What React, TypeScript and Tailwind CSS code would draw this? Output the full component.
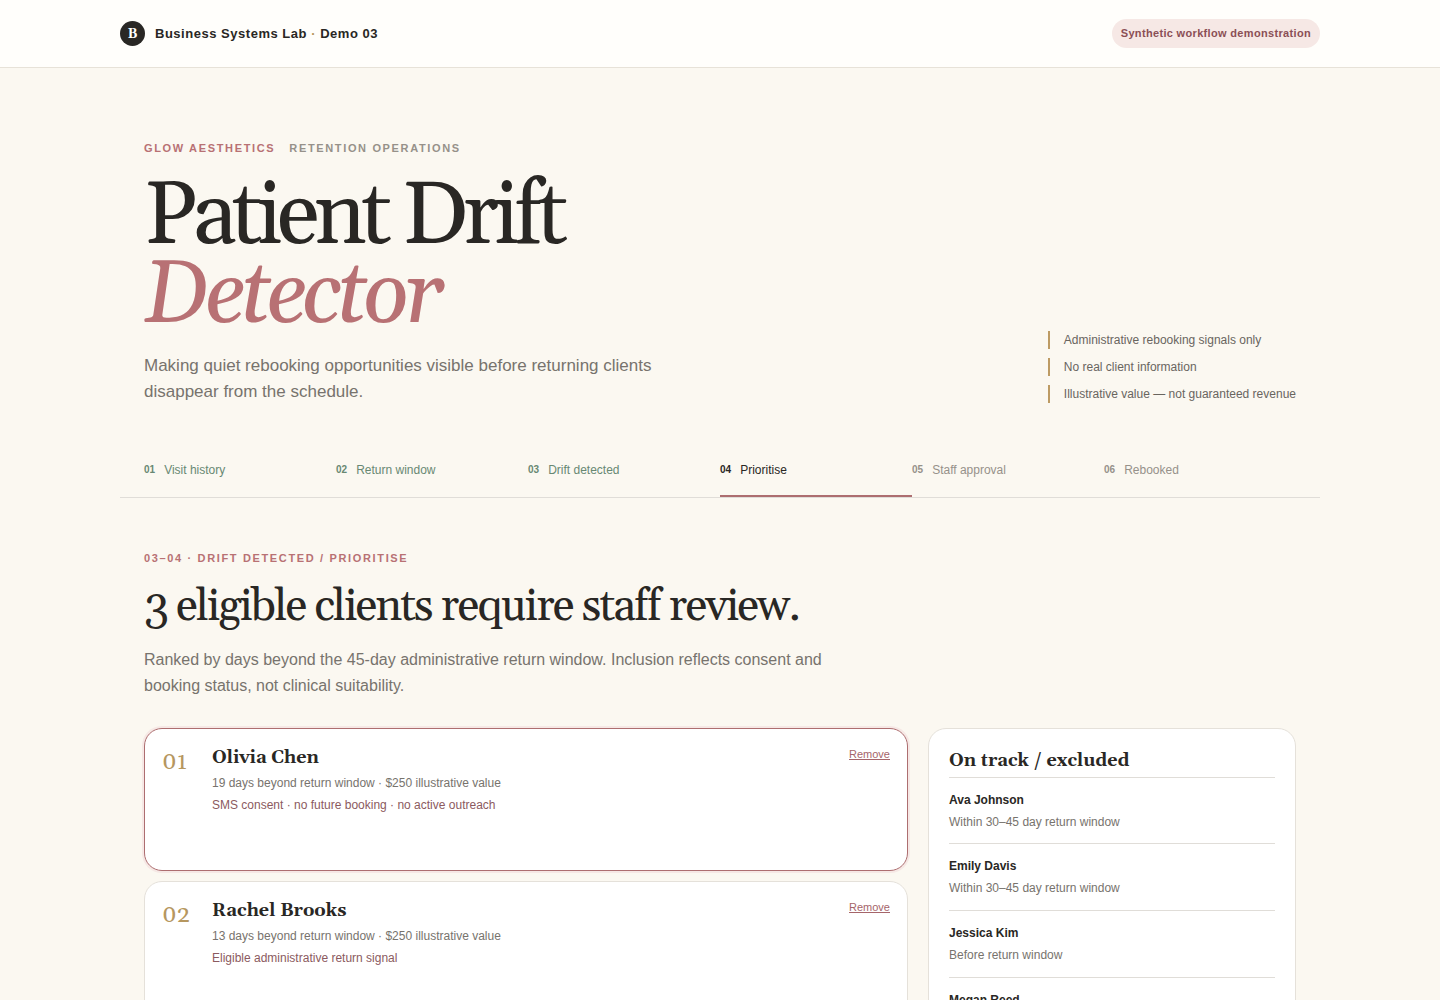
const steps = [
  { n: '01', label: 'Visit history', state: 'done' },
  { n: '02', label: 'Return window', state: 'done' },
  { n: '03', label: 'Drift detected', state: 'done' },
  { n: '04', label: 'Prioritise', state: 'active' },
  { n: '05', label: 'Staff approval', state: 'next' },
  { n: '06', label: 'Rebooked', state: 'next' },
];

const stepStyle: Record<string, string> = {
  done: 'text-[#688873] border-transparent',
  active: 'text-[#292724] border-[#ad6e70]',
  next: 'text-[#96918a] border-transparent',
};

const clients = [
  {
    n: '01',
    name: 'Olivia Chen',
    detail: '19 days beyond return window · $250 illustrative value',
    note: 'SMS consent · no future booking · no active outreach',
    selected: true,
  },
  {
    n: '02',
    name: 'Rachel Brooks',
    detail: '13 days beyond return window · $250 illustrative value',
    note: 'Eligible administrative return signal',
    selected: false,
  },
];

const excluded = [
  { name: 'Ava Johnson', reason: 'Within 30–45 day return window' },
  { name: 'Emily Davis', reason: 'Within 30–45 day return window' },
  { name: 'Jessica Kim', reason: 'Before return window' },
  { name: 'Megan Reed', reason: 'Future booking in place' },
];

const facts = [
  'Administrative rebooking signals only',
  'No real client information',
  'Illustrative value — not guaranteed revenue',
];

export default function App() {
  return (
    <div className='h-screen overflow-hidden bg-[#fbf8f1] font-["Liberation_Sans",Arial,sans-serif] text-[#292724]'>
      <header className="border-b border-[#e7e2d8] bg-[#fffefb]">
        <div className="mx-auto flex h-[67px] max-w-[1200px] items-center justify-between">
          <div className="flex items-center gap-[10px]">
            <span className='flex size-[25px] items-center justify-center rounded-full bg-[#292724] pt-[2px] font-[Georgia,Gelasio,"Liberation_Serif",serif] text-[13px] font-bold text-white'>
              B
            </span>
            <span className="text-[13px] font-bold tracking-[0.04em]">
              Business Systems Lab <span className="text-[#b6975f]">·</span> Demo 03
            </span>
          </div>
          <span className="rounded-full bg-[#f6e8e5] px-[9px] py-[5px] text-[11px] leading-[19px] font-bold tracking-[0.03em] text-[#8b4f55]">
            Synthetic workflow demonstration
          </span>
        </div>
      </header>

      <main className="mx-auto max-w-[1200px]">
        <section className="flex items-end justify-between px-6 pt-[71px]">
          <div>
            <p className="flex gap-[14px] text-[11px] leading-[18px] font-bold tracking-[0.15em] uppercase">
              <span className="text-[#b87174]">Glow Aesthetics</span>
              <span className="text-[#96918a]">Retention Operations</span>
            </p>
            <h1 className='mt-[21px] font-[Georgia,Gelasio,"Liberation_Serif",serif] text-[88px] leading-[79px] tracking-[-0.06em]'>
              Patient Drift
              <em className="block text-[#b87174]">Detector</em>
            </h1>
            <p className="mt-[17px] max-w-[560px] text-[17px] leading-[26px] text-[#77736d]">
              Making quiet rebooking opportunities visible before returning clients disappear from the schedule.
            </p>
          </div>
          <ul className="mb-[2px] flex flex-col gap-[9px]">
            {facts.map((f) => (
              <li key={f} className="border-l-2 border-[#bd9b64] pl-[14px] text-[12px] leading-[18px] text-[#69655f]">
                {f}
              </li>
            ))}
          </ul>
        </section>

        <ol className="mt-[37px] grid grid-cols-6 border-b border-[#e0ddd8] px-6">
          {steps.map((s) => (
            <li
              key={s.n}
              className={`flex items-center gap-[9px] border-b-2 pt-[19px] pb-[16px] text-[12px] leading-[18px] ${stepStyle[s.state]}`}
            >
              <b className="text-[10px]">{s.n}</b>
              {s.label}
            </li>
          ))}
        </ol>

        <section className="px-6 pt-[51px]">
          <p className="text-[11px] leading-[18px] font-bold tracking-[0.15em] text-[#b87174] uppercase">
            03–04 · Drift detected / Prioritise
          </p>
          <h2 className='mt-[15px] font-[Georgia,Gelasio,"Liberation_Serif",serif] text-[45px] leading-[50px] tracking-[-0.04em]'>
            3 eligible clients require staff review.
          </h2>
          <p className="mt-[15px] max-w-[700px] text-[16px] leading-[26px] text-[#77736d]">
            Ranked by days beyond the 45-day administrative return window. Inclusion reflects consent and booking
            status, not clinical suitability.
          </p>

          <div className="mt-[29px] grid grid-cols-[1fr_368px] items-start gap-5">
            <div className="grid gap-[10px]">
              {clients.map((c) => (
                <article
                  key={c.n}
                  className={`flex min-h-[143px] items-start rounded-[18px] border bg-white px-[17px] py-[17px] ${
                    c.selected ? 'border-[#ad6e70] shadow-[0_0_0_2px_#f6e8e5]' : 'border-[#e5e1da]'
                  }`}
                >
                  <span className='w-[50px] pt-px font-[Georgia,Gelasio,"Liberation_Serif",serif] text-[24px] leading-[30px] text-[#b6975f]'>
                    {c.n}
                  </span>
                  <div className="flex-1">
                    <h3 className='pt-px font-[Georgia,Gelasio,"Liberation_Serif",serif] text-[18px] leading-[22px] font-bold'>
                      {c.name}
                    </h3>
                    <p className="mt-[5px] text-[12px] leading-[18px] text-[#77736d]">{c.detail}</p>
                    <p className="mt-1 text-[12px] leading-[18px] text-[#8b5a60]">{c.note}</p>
                  </div>
                  <button type="button" className="text-[11px] leading-[16px] text-[#a5656a] underline">
                    Remove
                  </button>
                </article>
              ))}
            </div>

            <aside className="rounded-[18px] border border-[#e5e1da] bg-white p-5">
              <h3 className='border-b border-[#e0ddd8] pt-px pb-[5px] font-[Georgia,Gelasio,"Liberation_Serif",serif] text-[18px] leading-[22px] font-bold'>
                On track / excluded
              </h3>
              <ul>
                {excluded.map((e) => (
                  <li
                    key={e.name}
                    className="border-b border-[#e0ddd8] pt-[13px] pb-[13px] text-[12px] leading-[18px] first:pb-[12px]"
                  >
                    <strong className="block">{e.name}</strong>
                    <span className="mt-1 block text-[#77736d]">{e.reason}</span>
                  </li>
                ))}
              </ul>
            </aside>
          </div>
        </section>
      </main>
    </div>
  );
}
